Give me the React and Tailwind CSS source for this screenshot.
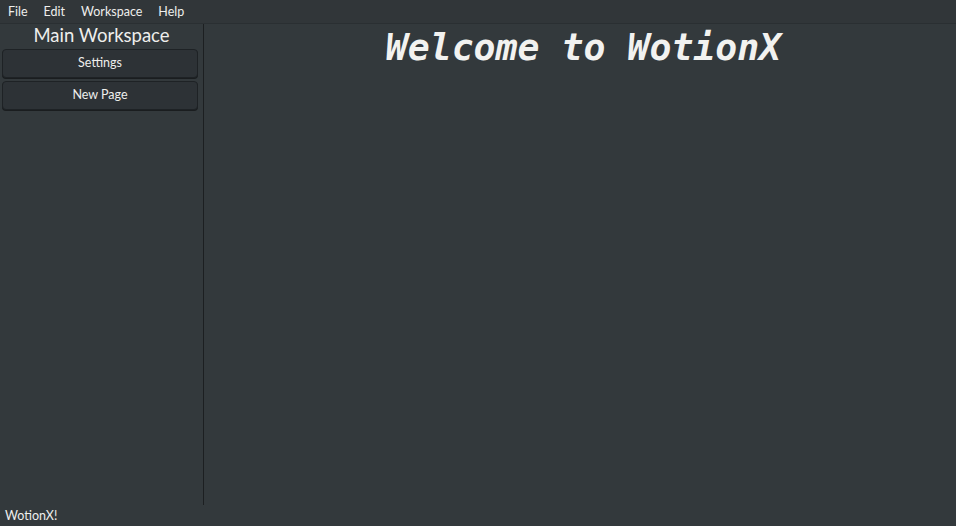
export default function App() {
  const menus = ['File', 'Edit', 'Workspace', 'Help']

  return (
    <div
      className="w-[956px] h-[526px] flex flex-col bg-[#33393c] text-[#eeeeec] overflow-hidden"
      style={{ fontFamily: 'Lato, "Noto Sans", sans-serif' }}
    >
      {/* menu bar */}
      <div className="h-[24px] shrink-0 flex items-center gap-[16px] px-[8px] pt-[2px] text-[12.5px] border-b border-[#2a2f32] bg-[#313639]">
        {menus.map((m) => (
          <span key={m}>{m}</span>
        ))}
      </div>

      <div className="flex flex-1 min-h-0">
        {/* sidebar */}
        <aside className="w-[204px] shrink-0 flex flex-col gap-[3px] px-[2px] border-r border-[#1c1f21]">
          <div className="text-center text-[18.5px] leading-[21px] pt-[1px]">Main Workspace</div>
          <button className="h-[29px] w-[196px] rounded-[4px] bg-[#2d3236] border border-[#1e2225] shadow-[0_1px_0_#1a1d1f] text-[12.5px]">
            Settings
          </button>
          <button className="h-[29px] w-[196px] rounded-[4px] bg-[#2d3236] border border-[#1e2225] shadow-[0_1px_0_#1a1d1f] text-[12.5px]">
            New Page
          </button>
        </aside>

        {/* main */}
        <main className="flex-1 flex justify-center pt-[1px] pl-[7px]">
          <h1
            className="text-[36.5px] leading-[46px] font-bold italic text-[#f2f2f0]"
            style={{ fontFamily: '"DejaVu Sans Mono", monospace' }}
          >
            Welcome to WotionX
          </h1>
        </main>
      </div>

      {/* status bar */}
      <div className="h-[21px] shrink-0 flex items-center px-[5px] pt-[2px] text-[12.5px]">WotionX!</div>
    </div>
  )
}
